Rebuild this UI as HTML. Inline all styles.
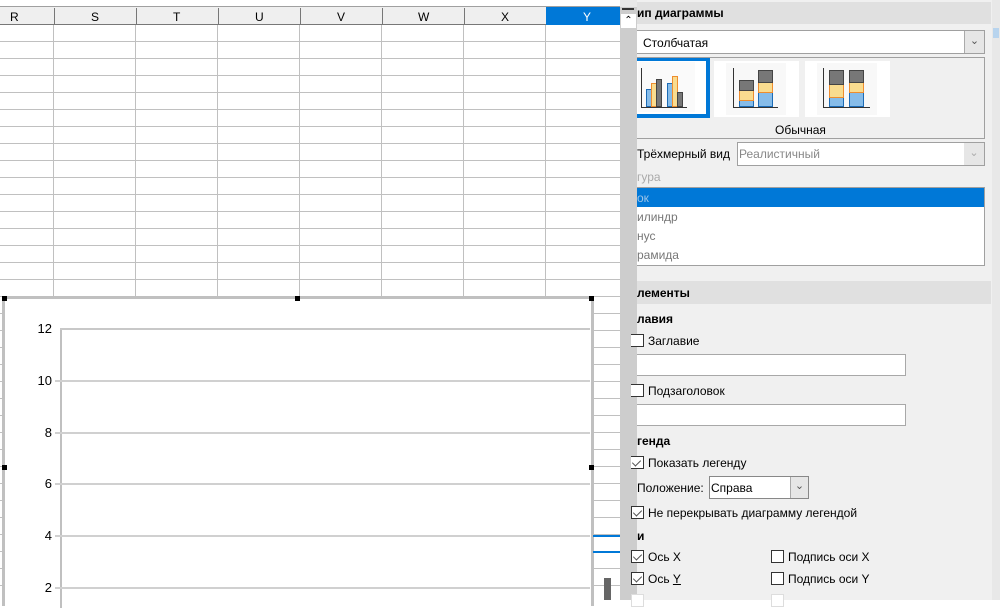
<!DOCTYPE html>
<html><head><meta charset="utf-8"><style>
*{margin:0;padding:0;box-sizing:border-box}
body{width:1000px;height:600px;overflow:hidden;background:#fff;font-family:"Liberation Sans","DejaVu Sans",sans-serif;font-size:12px;color:#000;position:relative}
.a{position:absolute}
.t{position:absolute;white-space:nowrap;line-height:14px}
.b{font-weight:bold}
.cb{position:absolute;width:13px;height:13px;border:1px solid #333;background:#fff}
.cb.c::after{content:"";position:absolute;left:3px;top:1px;width:4px;height:7px;border:solid #555;border-width:0 1.5px 1.5px 0;transform:rotate(45deg)}
</style></head><body>
<!-- sheet grid -->
<div class="a" style="left:0;top:0;width:620px;height:600px;background:
repeating-linear-gradient(to bottom,transparent 0 16px,#c0c0c0 16px 17px) 0 25px/620px 600px no-repeat,#fff"></div>
<div class="a" style="left:0;top:0;width:620px;height:600px;background:repeating-linear-gradient(to right,transparent 0 81px,#c0c0c0 81px 82px);background-position:-28px 0"></div>
<div class="a" style="left:0;top:0;width:620px;height:7px;background:#fff;border-bottom:1px solid #a0a0a0"></div>
<div class="a" style="left:0;top:7px;width:620px;height:18px;background:#efefef;border-bottom:1px solid #777"></div>
<div class="a" style="left:546px;top:7px;width:74px;height:18px;background:#0078d7"></div>
<div class="a" style="left:54px;top:8px;width:1px;height:17px;background:#777"></div>
<div class="a" style="left:136px;top:8px;width:1px;height:17px;background:#777"></div>
<div class="a" style="left:218px;top:8px;width:1px;height:17px;background:#777"></div>
<div class="a" style="left:300px;top:8px;width:1px;height:17px;background:#777"></div>
<div class="a" style="left:382px;top:8px;width:1px;height:17px;background:#777"></div>
<div class="a" style="left:464px;top:8px;width:1px;height:17px;background:#777"></div>
<div class="t" style="left:10px;top:10px">R</div>
<div class="t" style="left:91px;top:10px">S</div>
<div class="t" style="left:173px;top:10px">T</div>
<div class="t" style="left:255px;top:10px">U</div>
<div class="t" style="left:337px;top:10px">V</div>
<div class="t" style="left:418px;top:10px">W</div>
<div class="t" style="left:501px;top:10px">X</div>
<div class="t" style="left:583px;top:10px;color:#fff">Y</div>
<!-- chart -->
<div class="a" style="left:2px;top:296px;width:592px;height:310px;background:#fff;border:3px solid #c0c0c0;border-bottom:none"></div>
<div class="a" style="left:2px;top:296px;width:5px;height:5px;background:#000"></div>
<div class="a" style="left:295px;top:296px;width:5px;height:5px;background:#000"></div>
<div class="a" style="left:589px;top:296px;width:5px;height:5px;background:#000"></div>
<div class="a" style="left:2px;top:465px;width:5px;height:5px;background:#000"></div>
<div class="a" style="left:589px;top:465px;width:5px;height:5px;background:#000"></div>
<div class="a" style="left:60px;top:328px;width:2px;height:280px;background:#c0c0c0"></div>
<div class="a" style="left:60px;top:328px;width:530px;height:2px;background:#c8c8c8"></div>
<div class="a" style="left:55px;top:380px;width:535px;height:2px;background:#d0d0d0"></div>
<div class="a" style="left:55px;top:432px;width:535px;height:2px;background:#d0d0d0"></div>
<div class="a" style="left:55px;top:483px;width:535px;height:2px;background:#d0d0d0"></div>
<div class="a" style="left:55px;top:535px;width:535px;height:2px;background:#d0d0d0"></div>
<div class="a" style="left:55px;top:587px;width:535px;height:2px;background:#d0d0d0"></div>
<div class="t" style="left:30px;top:322px;width:22px;text-align:right;font-size:13px">12</div>
<div class="t" style="left:30px;top:374px;width:22px;text-align:right;font-size:13px">10</div>
<div class="t" style="left:30px;top:426px;width:22px;text-align:right;font-size:13px">8</div>
<div class="t" style="left:30px;top:477px;width:22px;text-align:right;font-size:13px">6</div>
<div class="t" style="left:30px;top:529px;width:22px;text-align:right;font-size:13px">4</div>
<div class="t" style="left:30px;top:581px;width:22px;text-align:right;font-size:13px">2</div>
<div class="a" style="left:593px;top:535px;width:27px;height:2px;background:#0078d7"></div>
<div class="a" style="left:593px;top:551px;width:27px;height:2px;background:#0078d7"></div>
<div class="a" style="left:604px;top:578px;width:7px;height:22px;background:#666"></div>
<!-- scrollbar -->
<div class="a" style="left:620px;top:0;width:17px;height:600px;background:#cdcdcd"></div>
<div class="a" style="left:620px;top:0;width:17px;height:7px;background:#e8e8e8"></div>
<div class="a" style="left:622px;top:8px;width:12px;height:2px;background:#333"></div>
<div class="a" style="left:621px;top:14px;width:15px;height:14px;background:#fff;font-size:10px;text-align:center;line-height:14px">&#8963;</div>
<!-- panel -->
<div class="a" style="left:637px;top:0;width:363px;height:600px;background:#f0f0f0"></div>
<div class="a" style="left:992px;top:0;width:8px;height:600px;background:#e8e8e8"></div>
<div class="a" style="left:993px;top:28px;width:6px;height:10px;background:#b8d4ee"></div>
<div class="a" style="left:637px;top:2px;width:354px;height:22px;background:#e0e0e0"></div>
<div class="t b" style="left:637px;top:6px">ип диаграммы</div>
<div class="a" style="left:637px;top:30px;width:348px;height:24px;background:#fff;border:1px solid #a0a0a0;border-left:none"></div>
<div class="a" style="left:964px;top:31px;width:20px;height:22px;background:#e6e6e6;border-left:1px solid #aaa;text-align:center;color:#555;font-size:11px;line-height:20px">&#8964;</div>
<div class="t" style="left:643px;top:36px">Столбчатая</div>
<div class="a" style="left:637px;top:57px;width:348px;height:82px;border:1px solid #a0a0a0;border-left:none"></div>
<svg class="a" style="left:630px;top:55px" width="270" height="70" viewBox="630 55 270 70">
<rect x="714" y="61" width="85" height="56" fill="#fff"/><rect x="805" y="61" width="85" height="56" fill="#fff"/>
<rect x="637" y="58" width="73" height="60" fill="#0078d7"/><rect x="637" y="61" width="69" height="53" fill="#fff"/>
<rect x="638" y="62" width="57" height="50" fill="#fafafa"/><rect x="726" y="63" width="60" height="52" fill="#f8f8f8"/><rect x="817" y="63" width="60" height="52" fill="#f8f8f8"/>
<g stroke-width="1">
<rect x="646.5" y="89.5" width="5" height="17" fill="#86bce9" stroke="#1c6bb5"/><rect x="651.5" y="83.5" width="5" height="23" fill="#f9dc8f" stroke="#ee8d2e"/><rect x="656.5" y="79.5" width="5" height="27" fill="#777" stroke="#444"/>
<rect x="667.5" y="83.5" width="5" height="23" fill="#86bce9" stroke="#1c6bb5"/><rect x="672.5" y="76.5" width="5" height="30" fill="#f9dc8f" stroke="#ee8d2e"/><rect x="677.5" y="92.5" width="5" height="14" fill="#777" stroke="#444"/>
<rect x="739.5" y="100.5" width="14" height="6" fill="#86bce9" stroke="#1c6bb5"/><rect x="739.5" y="90.5" width="14" height="10" fill="#f9dc8f" stroke="#ee8d2e"/><rect x="739.5" y="80.5" width="14" height="10" fill="#777" stroke="#444"/>
<rect x="758.5" y="92.5" width="14" height="14" fill="#86bce9" stroke="#1c6bb5"/><rect x="758.5" y="82.5" width="14" height="10" fill="#f9dc8f" stroke="#ee8d2e"/><rect x="758.5" y="70.5" width="14" height="12" fill="#777" stroke="#444"/>
<rect x="829.5" y="97.5" width="14" height="9" fill="#86bce9" stroke="#1c6bb5"/><rect x="829.5" y="84.5" width="14" height="13" fill="#f9dc8f" stroke="#ee8d2e"/><rect x="829.5" y="70.5" width="14" height="14" fill="#777" stroke="#444"/>
<rect x="849.5" y="92.5" width="14" height="14" fill="#86bce9" stroke="#1c6bb5"/><rect x="849.5" y="82.5" width="14" height="10" fill="#f9dc8f" stroke="#ee8d2e"/><rect x="849.5" y="70.5" width="14" height="12" fill="#777" stroke="#444"/>
</g>
<g stroke="#333" stroke-width="1" fill="none"><path d="M641.5 68V107.5H687"/><path d="M733.5 68V107.5H778"/><path d="M823.5 68V107.5H870"/></g>
</svg>
<div class="t" style="left:775px;top:123px">Обычная</div>
<div class="t" style="left:637px;top:147px">Трёхмерный вид</div>
<div class="a" style="left:737px;top:142px;width:248px;height:24px;background:#fff;border:1px solid #a0a0a0"></div>
<div class="a" style="left:964px;top:143px;width:20px;height:22px;background:#e6e6e6;text-align:center;color:#aaa;font-size:11px;line-height:20px">&#8964;</div>
<div class="t" style="left:739px;top:147px;color:#888">Реалистичный</div>
<div class="t" style="left:637px;top:170px;color:#aaa">гура</div>
<div class="a" style="left:637px;top:187px;width:348px;height:79px;background:#fff;border:1px solid #a0a0a0;border-left:none"></div>
<div class="a" style="left:637px;top:188px;width:347px;height:19px;background:#0078d7"></div>
<div class="t" style="left:637px;top:191px;color:#9cc4e8">ок</div>
<div class="t" style="left:637px;top:210px;color:#777">илиндр</div>
<div class="t" style="left:637px;top:229px;color:#777">нус</div>
<div class="t" style="left:637px;top:248px;color:#777">рамида</div>
<div class="a" style="left:637px;top:281px;width:354px;height:23px;background:#e0e0e0"></div>
<div class="t b" style="left:637px;top:286px">лементы</div>
<div class="t b" style="left:637px;top:312px">лавия</div>
<div class="cb" style="left:631px;top:334px;border-left:none"></div>
<div class="t" style="left:648px;top:334px">Заглавие</div>
<div class="a" style="left:637px;top:354px;width:269px;height:22px;background:#fff;border:1px solid #a8a8a8;border-left:none"></div>
<div class="cb" style="left:631px;top:384px;border-left:none"></div>
<div class="t" style="left:648px;top:384px">Подзаголовок</div>
<div class="a" style="left:637px;top:404px;width:269px;height:22px;background:#fff;border:1px solid #a8a8a8;border-left:none"></div>
<div class="t b" style="left:637px;top:434px">генда</div>
<div class="cb c" style="left:631px;top:456px;border-left:none"></div>
<div class="t" style="left:648px;top:456px">Показать легенду</div>
<div class="t" style="left:637px;top:481px">Положение:</div>
<div class="a" style="left:709px;top:476px;width:100px;height:23px;background:#fff;border:1px solid #888"></div>
<div class="a" style="left:790px;top:477px;width:18px;height:21px;background:#e6e6e6;border-left:1px solid #aaa;text-align:center;color:#555;font-size:11px;line-height:18px">&#8964;</div>
<div class="t" style="left:711px;top:481px">Справа</div>
<div class="cb c" style="left:631px;top:506px"></div>
<div class="t" style="left:648px;top:506px">Не перекрывать диаграмму легендой</div>
<div class="t b" style="left:637px;top:529px">и</div>
<div class="cb c" style="left:631px;top:550px"></div>
<div class="t" style="left:648px;top:550px">Ось X</div>
<div class="cb" style="left:771px;top:550px"></div>
<div class="t" style="left:788px;top:550px">Подпись оси X</div>
<div class="cb c" style="left:631px;top:572px"></div>
<div class="t" style="left:648px;top:572px">Ось <u>Y</u></div>
<div class="cb" style="left:771px;top:572px"></div>
<div class="t" style="left:788px;top:572px">Подпись оси Y</div>
<div class="cb" style="left:631px;top:594px;border-color:#ddd"></div>
<div class="cb" style="left:771px;top:594px;border-color:#ddd"></div>
</body></html>
